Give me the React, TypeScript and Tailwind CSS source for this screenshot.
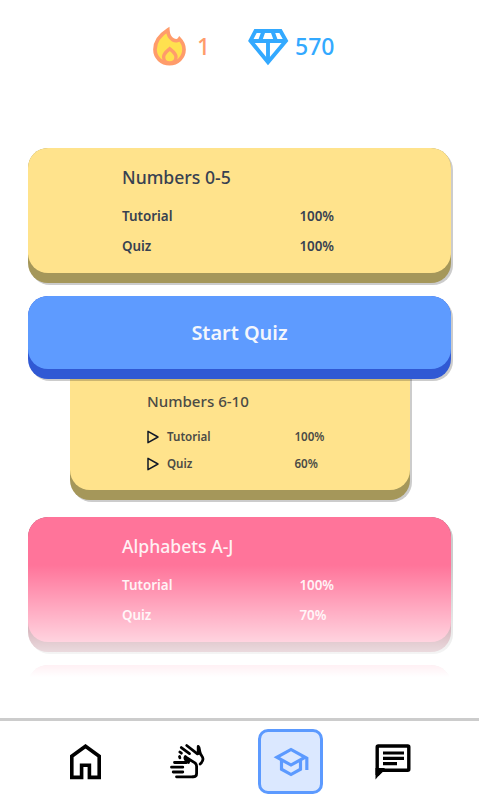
import { ReactNode } from "react";
import { MdOutlineSchool } from "react-icons/md";

const FlameIcon = () => (
  <svg width="34" height="40" viewBox="0 0 34 40" fill="none">
    <path
      d="M14.8 4C7 9 2 16 2 23.5C2 31.5 8.5 37.6 16.5 37.6C24.5 37.6 31 31.5 31 23.5C31 19.5 29.3 15.8 26.5 13C24 16.8 15.4 14.5 14.8 4Z"
      fill="#ffe14f"
      stroke="#ff9c6b"
      strokeWidth="3.7"
    />
    <path
      d="M16.7 22.8C13.5 25.5 10.6 27.5 10.6 31C10.6 34.8 13.3 37 16.7 37C20.2 37 23 34.8 23 31C23 27.5 20 25.5 16.7 22.8Z"
      fill="#ffe14f"
      stroke="#ff9c6b"
      strokeWidth="3.4"
    />
  </svg>
);

const DiamondIcon = () => (
  <svg
    width="41"
    height="37"
    viewBox="0 0 41 37"
    fill="none"
    stroke="#33a9ff"
    strokeWidth="3.9"
  >
    <path d="M7.5 2H32.5L38 11.8L20 33.3L2.4 11.8Z" />
    <path d="M3 12H37" />
    <path d="M20 12V31" />
    <path d="M15.6 2L12 12M24.4 2L28 12" />
  </svg>
);

const HomeIcon = () => (
  <svg width="32" height="36" viewBox="0 0 32 36" fill="none">
    <path
      d="M1.8 33.4V12.2L15.5 2.2L29.2 12.2V33.4H19.4V21.3H11.6V33.4Z"
      stroke="#000"
      strokeWidth="3.6"
    />
  </svg>
);

const HandsIcon = () => (
  <svg
    width="38"
    height="38"
    viewBox="0 0 38 38"
    fill="none"
    stroke="#000"
    strokeWidth="2.8"
    strokeLinecap="round"
    strokeLinejoin="round"
  >
    <path d="M5.5 19.5H17.5M2.5 24.2H13.8M4.2 29H13.8M7.5 33.8H24" />
    <path d="M24 33.8C26 33.8 27.6 32.6 27.6 30.5V23.3C27.6 21.8 27 20.8 25.9 19.9L16.5 13.8" />
    <path d="M16.3 13.8C15.2 15.5 16.8 17.6 19.5 19.4L17.5 16.5L20.5 17.5" />
    <path d="M12.3 4.6L20.5 10.6M17.7 2.5L28.4 10.8" />
    <path d="M29.2 3.5V10.5M30 4.5L31.2 10.2C32 12.4 34 13.5 34 16C34 18.3 32.8 19.5 31.2 21" />
    <path d="M10.8 9L12.4 10.2M10.5 13.5L10.9 14.8" />
  </svg>
);

const ChatIcon = () => (
  <svg width="36" height="36" viewBox="0 0 36 36" fill="none">
    <path
      d="M2.2 31V3Q2.2 2 3.2 2H32.8Q33.8 2 33.8 3V25.2Q33.8 26.2 32.8 26.2H7L2.2 31"
      stroke="#000"
      strokeWidth="3.4"
    />
    <path d="M0.5 35.5V24H10Z" fill="#000" />
    <path d="M8 9H29M8 14.3H29M8 19.7H22" stroke="#000" strokeWidth="3.2" />
  </svg>
);

const PlayIcon = () => (
  <svg width="12" height="14" viewBox="0 0 12 14" fill="none">
    <path
      d="M1 1.3V12.7L11 7Z"
      stroke="#111827"
      strokeWidth="1.5"
      strokeLinejoin="round"
    />
  </svg>
);

interface LessonCardProps {
  className: string;
  faceClassName: string;
  children?: ReactNode;
}

const LessonCard = ({ className, faceClassName, children }: LessonCardProps) => (
  <div className={`h-[135px] shrink-0 rounded-[20px] shadow-[2px_2px_0_#ccc] ${className}`}>
    <div className={`h-[125px] rounded-[20px] pl-[94px] pt-[17px] ${faceClassName}`}>
      {children}
    </div>
  </div>
);

const LessonText = ({ title, tutorial, quiz }: { title: string; tutorial: string; quiz: string }) => (
  <>
    <h2 className="text-[17.6px] font-medium leading-6">{title}</h2>
    <div className="mt-3 grid grid-cols-[177.4px_1fr] text-[13.4px] font-semibold leading-[30px]">
      <span>Tutorial</span>
      <span>{tutorial}</span>
      <span>Quiz</span>
      <span>{quiz}</span>
    </div>
  </>
);

const NavItem = ({ active, children }: { active?: boolean; children: ReactNode }) => (
  <button
    className={`flex size-[65px] items-center justify-center rounded-[10px] border-[3px] ${
      active ? "border-[#5c9aff] bg-[#dbe8ff] text-[#5c9aff]" : "border-transparent text-black"
    }`}
  >
    {children}
  </button>
);

const App = () => {
  return (
    <div className="flex h-[800px] w-[479px] flex-col overflow-hidden bg-white font-['Noto_Sans',sans-serif]">
      <header className="flex h-[148px] shrink-0 pl-[153px] pt-[26px] text-[23px] font-medium leading-10">
        <FlameIcon />
        <span className="ml-[10px] w-[50.5px] text-[#ff9c6b]">1</span>
        <div className="mt-[3px]">
          <DiamondIcon />
        </div>
        <span className="ml-[6.5px] text-[#33a9ff]">570</span>
      </header>

      <main className="relative flex h-[570px] shrink-0 flex-col overflow-hidden pl-7 pr-7">
        <LessonCard className="bg-[#a5975a]" faceClassName="bg-[#ffe38c] text-[#374151]">
          <LessonText title="Numbers 0-5" tutorial="100%" quiz="100%" />
        </LessonCard>
        <button className="z-10 mt-[13px] h-[83px] shrink-0 rounded-[20px] bg-[#3059d4] pb-[10px] shadow-[2px_2px_0_rgba(0,0,0,0.2)]">
          <span className="flex h-[73px] items-center justify-center rounded-[20px] bg-[#5e9bff] text-[19.9px] font-semibold text-[#f3f6fc]">
            Start Quiz
          </span>
        </button>
        <div className="mx-[42px] -mt-2 h-[129px] w-[340px] shrink-0 rounded-b-[20px] bg-[#a5975a] shadow-[2px_2px_0_#ccc]">
          <div className="h-[118.5px] rounded-b-[20px] bg-[#ffe38c] pl-[77px] pt-[19px] text-[#4b4b46]">
            <h2 className="text-[15.1px] font-medium leading-[23px]">Numbers 6-10</h2>
            <div className="mt-[10px] grid grid-cols-[20px_127.4px_1fr] items-center text-[11.6px] font-semibold leading-[27px]">
              <PlayIcon />
              <span>Tutorial</span>
              <span>100%</span>
              <PlayIcon />
              <span>Quiz</span>
              <span>60%</span>
            </div>
          </div>
        </div>
        <LessonCard
          className="mt-[17px] bg-[#a55a6b]"
          faceClassName="bg-[#ff749a] text-[#fff0f4]"
        >
          <LessonText title="Alphabets A-J" tutorial="100%" quiz="70%" />
        </LessonCard>
        <LessonCard className="mt-[13px] bg-[#a55a6b]" faceClassName="bg-[#ff749a]" />
        {/* fades the list out above the nav */}
        <div className="pointer-events-none absolute inset-x-0 bottom-0 h-[153px] bg-linear-to-b from-transparent to-white to-[112px]" />
      </main>

      <nav className="flex grow gap-[37.5px] border-t-[3px] border-[#ccc] pl-[53px] pt-2">
        <NavItem>
          <HomeIcon />
        </NavItem>
        <NavItem>
          <HandsIcon />
        </NavItem>
        <NavItem active>
          <MdOutlineSchool size={38} />
        </NavItem>
        <NavItem>
          <ChatIcon />
        </NavItem>
      </nav>
    </div>
  );
};

export default App;
